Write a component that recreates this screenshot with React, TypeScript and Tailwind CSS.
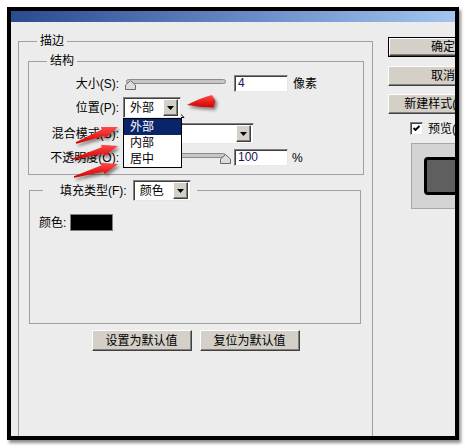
import React from "react";

function DropBtn() {
  return (
    <div className="w-[15px] h-[17px] shrink-0 bg-[#d4d0c8] border border-t-white border-l-white border-r-[#404040] border-b-[#404040] shadow-[inset_-1px_-1px_0_#808080] flex items-center justify-center">
      <svg width="7" height="4" viewBox="0 0 7 4">
        <path d="M0 0h7L3.5 4z" fill="#000" />
      </svg>
    </div>
  );
}

function Select({ className, text, children }: { className: string; text: string; children?: React.ReactNode }) {
  return (
    <div className={`relative flex items-center justify-between h-[21px] bg-white border border-t-[#808080] border-l-[#808080] border-r-[#e8e8e8] border-b-[#e8e8e8] shadow-[inset_1px_1px_0_#404040] pl-[6px] pr-[2px] ${className}`}>
      <span>{text}</span>
      <DropBtn />
      {children}
    </div>
  );
}

function Input({ value }: { value: string }) {
  return (
    <div className="w-[54px] h-[17px] bg-white border border-t-[#808080] border-l-[#808080] border-r-[#e8e8e8] border-b-[#e8e8e8] shadow-[inset_1px_1px_0_#404040] pl-[3px] leading-[15px] text-[#14145a]">
      {value}
    </div>
  );
}

function Slider({ thumb }: { thumb: string }) {
  return (
    <div className="relative w-[100px] h-[17px] ml-[7px] shrink-0">
      <div className="absolute left-0 right-0 top-[4px] h-[5px] rounded-full bg-[#c6c6c6] border border-[#8c8c8c]" />
      <svg className={`absolute top-[5px] ${thumb}`} width="11" height="10" viewBox="0 0 11 10">
        <path d="M0.5 9.5V5L5.5 0.6L10.5 5V9.5Z" fill="#dcdcdc" stroke="#6a6a6a" strokeWidth="1" />
      </svg>
    </div>
  );
}

function WinButton({ children, className, def }: { children: React.ReactNode; className: string; def?: boolean }) {
  const inner = (
    <div className="h-full w-full bg-[#d4d0c8] border border-t-white border-l-white border-r-[#404040] border-b-[#404040] shadow-[inset_-1px_-1px_0_#808080] flex items-center justify-center whitespace-nowrap">
      {children}
    </div>
  );
  if (def) {
    return <div className={`border border-black shrink-0 ${className}`}>{inner}</div>;
  }
  return <div className={`shrink-0 ${className}`}>{inner}</div>;
}

function arrowPts(tx: number, ty: number, px: number, py: number) {
  const dx = px - tx;
  const dy = py - ty;
  const L = Math.hypot(dx, dy);
  const ux = dx / L;
  const uy = dy / L;
  const nx = -uy;
  const ny = ux;
  const hl = 16;
  const hw = 6;
  const bw = 3.4;
  const bx = px - ux * hl;
  const by = py - uy * hl;
  const p = (x: number, y: number) => `${x.toFixed(1)},${y.toFixed(1)}`;
  return [
    p(tx + nx * 0.8, ty + ny * 0.8),
    p(bx + nx * bw, by + ny * bw),
    p(bx + nx * hw, by + ny * hw),
    p(px, py),
    p(bx - nx * hw, by - ny * hw),
    p(bx - nx * bw, by - ny * bw),
    p(tx - nx * 0.8, ty - ny * 0.8),
  ].join(" ");
}

export default function App() {
  return (
    <div className="relative w-[465px] h-[448px] bg-white overflow-hidden pl-[7px] pt-[7px] font-['Liberation_Sans','Noto_Sans_CJK_SC',sans-serif] text-[12px] leading-[14px] text-black">
      <div className="w-[452px] h-[433px] border-4 border-black shadow-[2px_3px_3px_rgba(0,0,0,0.45)] flex flex-col">
        <div className="h-[11px] shrink-0 bg-[linear-gradient(to_right,#2c4a90,#6585c4_50%,#a3c5ee)]" />
        <div className="flex-1 bg-[#ececec] flex overflow-hidden">
          {/* left column */}
          <div className="pl-[7px] pt-[12px] shrink-0">
            <fieldset className="w-[355px] h-[420px] border border-[#a0a0a0]">
              <legend className="ml-[18px] px-[3px] leading-[14px]">描边</legend>
              <fieldset className="ml-[9px] mt-[6px] w-[336px] h-[121px] border border-[#a0a0a0]">
                <legend className="ml-[18px] px-[3px] leading-[14px]">结构</legend>
                <div className="pt-[7px] flex flex-col">
                  <div className="flex items-center h-[17px]">
                    <div className="w-[90px] text-right shrink-0">大小(S):</div>
                    <Slider thumb="left-[-1px]" />
                    <div className="ml-[8px]">
                      <Input value="4" />
                    </div>
                    <div className="ml-[5px]">像素</div>
                  </div>
                  <div className="relative z-10 flex items-center h-[21px] mt-[5px]">
                    <div className="w-[90px] text-right shrink-0">位置(P):</div>
                    <Select className="ml-[4px] w-[58px]" text="外部">
                      <div className="absolute left-[-1px] top-[20px] w-[59px] border border-black bg-white flex flex-col">
                        <div className="h-[16px] leading-[16px] pl-[6px] bg-[#0a246a] text-white">外部</div>
                        <div className="h-[16px] leading-[16px] pl-[6px]">内部</div>
                        <div className="h-[16px] leading-[16px] pl-[6px]">居中</div>
                      </div>
                    </Select>
                  </div>
                  <div className="flex items-center h-[21px] mt-[5px]">
                    <div className="w-[90px] text-right shrink-0">混合模式(B):</div>
                    <Select className="ml-[4px] w-[131px]" text="" />
                  </div>
                  <div className="flex items-center h-[17px] mt-[5px]">
                    <div className="w-[90px] text-right shrink-0">不透明度(O):</div>
                    <Slider thumb="left-[94px]" />
                    <div className="ml-[8px]">
                      <Input value="100" />
                    </div>
                    <div className="ml-[4px]">%</div>
                  </div>
                </div>
              </fieldset>
              <fieldset className="ml-[10px] mt-[5px] w-[332px] h-[144px] border border-[#a0a0a0]">
                <legend className="ml-[13px] pl-[17px] pr-[6px] flex items-center h-[21px]">
                  <span>填充类型(F):</span>
                  <Select className="ml-[6px] w-[58px]" text="颜色" />
                </legend>
                <div className="mt-[13px] pl-[9px] flex items-center h-[17px]">
                  <span>颜色:</span>
                  <div className="ml-[4px] w-[43px] h-[17px] border border-[#808080] bg-black" />
                </div>
              </fieldset>
              <div className="mt-[6px] flex justify-center gap-[8px]">
                <WinButton className="w-[100px] h-[21px]">设置为默认值</WinButton>
                <WinButton className="w-[100px] h-[21px]">复位为默认值</WinButton>
              </div>
            </fieldset>
          </div>
          {/* right column */}
          <div className="ml-[15px] pt-[15px] shrink-0 w-[110px] flex flex-col">
            <WinButton def className="w-[110px] h-[20px]">确定</WinButton>
            <WinButton className="w-[110px] h-[20px] mt-[9px]">取消</WinButton>
            <WinButton className="w-[110px] h-[20px] mt-[8px]">新建样式(W)...</WinButton>
            <div className="mt-[8px] ml-[22px] flex items-center h-[13px]">
              <div className="w-[13px] h-[13px] bg-white border border-t-[#808080] border-l-[#808080] border-r-[#e8e8e8] border-b-[#e8e8e8] shadow-[inset_1px_1px_0_#404040] flex items-center justify-center">
                <svg width="9" height="9" viewBox="0 0 9 9">
                  <path d="M1.5 4 L3.5 6 L7.5 2" fill="none" stroke="#000" strokeWidth="1.8" />
                </svg>
              </div>
              <span className="ml-[5px] whitespace-nowrap">预览(V)</span>
            </div>
            <div className="mt-[8px] ml-[23px] w-[60px] h-[66px] bg-[#d4d4d4] border border-[#a8a8a8] pt-[13px] pl-[12px]">
              <div className="w-[38px] h-[38px] rounded-[4px] border-[3px] border-black bg-[#5f5f5f]" />
            </div>
          </div>
        </div>
      </div>

      {/* annotations */}
      <svg className="absolute left-0 top-0 pointer-events-none" width="465" height="448" viewBox="0 0 465 448">
        <defs>
          <linearGradient id="rg" x1="0" y1="0" x2="0" y2="1">
            <stop offset="0" stopColor="#ff4a4a" />
            <stop offset="1" stopColor="#d00000" />
          </linearGradient>
          <filter id="sh" x="-20%" y="-20%" width="160%" height="180%">
            <feDropShadow dx="2" dy="2.5" stdDeviation="1.4" floodColor="#000" floodOpacity="0.45" />
          </filter>
        </defs>
        <g filter="url(#sh)" fill="url(#rg)">
          <path d="M187 105 Q200 98 212 95 L215.5 101 L213.5 107.5 Q200 107 187 105 Z" />
          <polygon points={arrowPts(76, 143, 118, 127)} />
          <polygon points={arrowPts(73, 159, 118, 146)} />
          <polygon points={arrowPts(74, 177, 118, 164)} />
        </g>
        <path
          d="M173 106.5 L173 122.5 L177 118.5 L180 124.5 L182 123.5 L179 117.5 L184 117.5 Z"
          fill="#fff"
          stroke="#000"
          strokeWidth="1"
          strokeLinejoin="miter"
        />
      </svg>
    </div>
  );
}
